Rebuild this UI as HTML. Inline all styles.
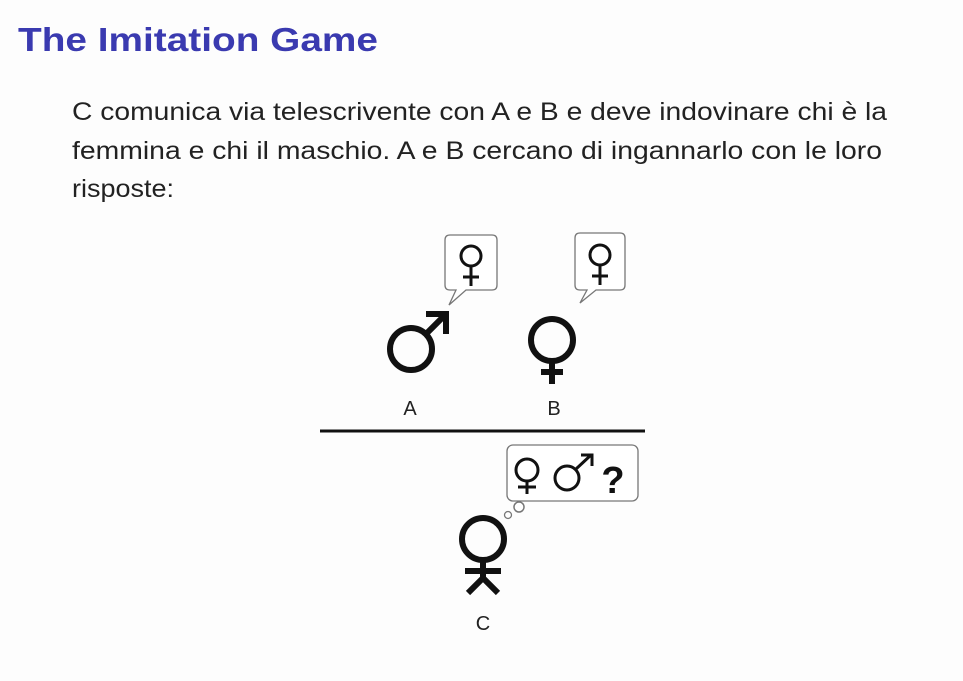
<!DOCTYPE html>
<html><head><meta charset="utf-8"><style>
html,body{margin:0;padding:0;background:#fff;width:963px;height:681px;overflow:hidden}
</style></head><body>
<svg width="963" height="681" viewBox="0 0 963 681" xmlns="http://www.w3.org/2000/svg" font-family="Liberation Sans, sans-serif">
<rect width="963" height="681" fill="#fdfdfd"/>
<text x="18" y="51" font-size="33" font-weight="bold" fill="#3a3ab0" textLength="360" lengthAdjust="spacingAndGlyphs">The Imitation Game</text>
<g font-size="25" fill="#222">
<text x="72" y="120" textLength="815" lengthAdjust="spacingAndGlyphs">C comunica via telescrivente con A e B e deve indovinare chi è la</text>
<text x="72" y="159" textLength="810" lengthAdjust="spacingAndGlyphs">femmina e chi il maschio. A e B cercano di ingannarlo con le loro</text>
<text x="72" y="197" textLength="102" lengthAdjust="spacingAndGlyphs">risposte:</text>
</g>
<g fill="none" stroke="#111">
<path d="M450 235 H492 Q497 235 497 240 V285 Q497 290 492 290 H466 L449 305 L456 290 H450 Q445 290 445 285 V240 Q445 235 450 235 Z" stroke="#777" stroke-width="1.3" fill="#fff"/>
<circle cx="471" cy="256" r="10" stroke-width="3"/>
<path d="M471 266V286M463 277H479" stroke-width="3"/>
<path d="M580 233H620Q625 233 625 238V285Q625 290 620 290H596L580 303L587 290H580Q575 290 575 285V238Q575 233 580 233Z" stroke="#777" stroke-width="1.3" fill="#fff"/>
<circle cx="600" cy="255" r="10" stroke-width="3"/>
<path d="M600 265V285M592 276H608" stroke-width="3"/>
<circle cx="411" cy="349" r="21" stroke-width="6"/>
<path d="M426 334L443 317" stroke-width="6"/>
<path d="M426 314H446V334" stroke-width="6"/>
<circle cx="552" cy="340" r="21" stroke-width="6"/>
<path d="M552 361V384M541 372H563" stroke-width="6"/>
<path d="M320 431H645" stroke-width="3"/>
<rect x="507" y="445" width="131" height="56" rx="6" stroke="#777" stroke-width="1.3" fill="#fff"/>
<circle cx="519" cy="507" r="5" stroke="#777" stroke-width="1.5" fill="#fff"/>
<circle cx="508" cy="515" r="3.5" stroke="#777" stroke-width="1.3" fill="#fff"/>
<circle cx="527" cy="470" r="11" stroke-width="3"/>
<path d="M527 481V494M518 487H536" stroke-width="3"/>
<circle cx="567" cy="478" r="12" stroke-width="3"/>
<path d="M576 469L591 455M581 455H592V466" stroke-width="3"/>
<circle cx="483" cy="539" r="21" stroke-width="6"/>
<path d="M483 560V579M465 571H501M483 578L468 593M483 578L498 593" stroke-width="6"/>
</g>
<text x="613" y="493" font-size="38" font-weight="bold" fill="#111" text-anchor="middle">?</text>
<g font-size="20" fill="#222" text-anchor="middle">
<text x="410" y="415">A</text>
<text x="554" y="415">B</text>
<text x="483" y="630">C</text>
</g>
</svg>
</body></html>
